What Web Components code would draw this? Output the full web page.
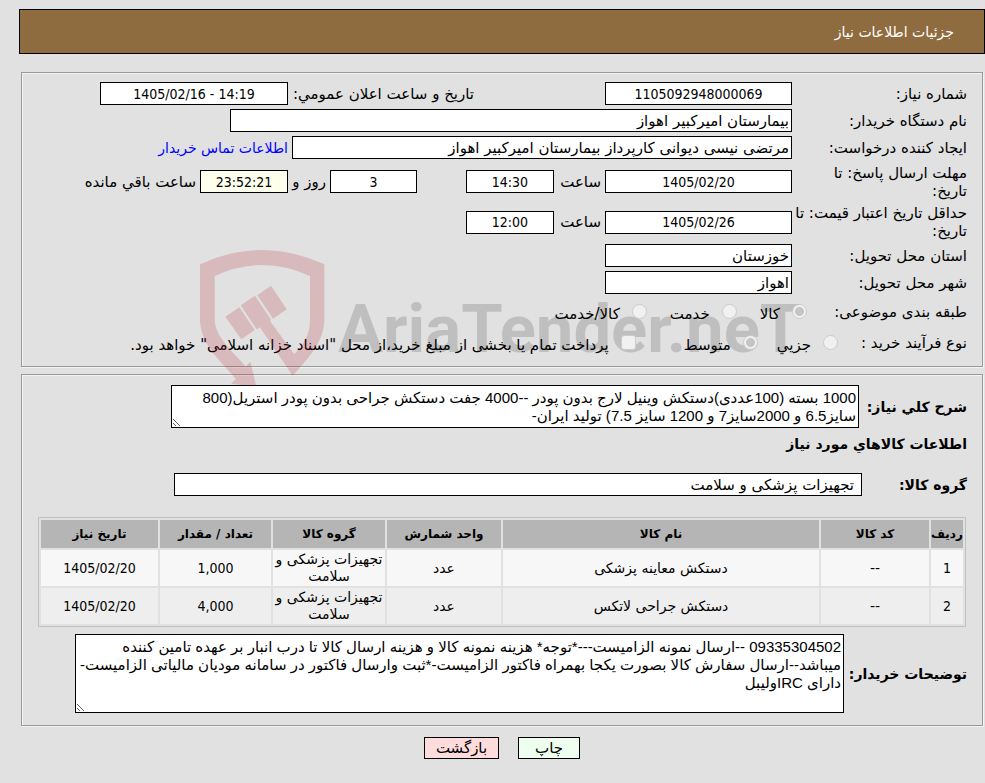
<!DOCTYPE html>
<html lang="fa" dir="rtl">
<head>
<meta charset="utf-8">
<title>جزئیات اطلاعات نیاز</title>
<style>
  body {
    --number-font: 14px/18px "DejaVu Sans Condensed", "DejaVu Sans", sans-serif;
    margin: 0;
    padding: 9px 0 16px 19px;
    background: #e1e1e1;
    color: #000;
    font: 15px/18px "DejaVu Sans", sans-serif;
  }
</style>
</head>
<body>
<need-page></need-page>

<script>
const define = (name, cls) => customElements.define(name, cls);

class PageBanner extends HTMLElement {
  constructor() {
    super();
    this.attachShadow({ mode: 'open' }).innerHTML = `
      <style>
        :host {
          display: block;
          padding: 13px 30px 12px;
          border: 1px solid #000;
          background: #8e6c40;
          color: #fff;
          font-size: 14px;
        }
        h1 { margin: 0; font: inherit; }
      </style>
      <h1><slot></slot></h1>
    `;
  }
}
define('page-banner', PageBanner);

class NeedPanel extends HTMLElement {
  constructor() {
    super();
    this.attachShadow({ mode: 'open' }).innerHTML = `
      <style>
        :host { display: block; margin: 0 1px 0 2px; }
        section {
          border: 1px solid #9a9a9a;
          box-shadow: inset 1px 1px #f2f2f2, 1px 1px #f2f2f2;
          padding: 7px 15px 8px;
          margin: 0 1px 1px 0;
        }
      </style>
      <section><slot></slot></section>
    `;
  }
}
define('need-panel', NeedPanel);

class NeedRow extends HTMLElement {
  constructor() {
    super();
    this.attachShadow({ mode: 'open' }).innerHTML = `
      <style>
        :host {
          display: flex;
          align-items: center;
          min-height: var(--row-height, 27px);
        }
      </style>
      <slot></slot>
    `;
  }
}
define('need-row', NeedRow);

// label + one line input, optional text after the input
class TextField extends HTMLElement {
  connectedCallback() {
    const label = this.getAttribute('label') || '';
    const hint = this.getAttribute('hint') || '';
    const value = this.getAttribute('value') || '';
    const suffix = this.getAttribute('suffix') || '';
    this.attachShadow({ mode: 'open' }).innerHTML = `
      <style>
        :host { display: flex; align-items: center; }
        label {
          box-sizing: border-box;
          width: var(--label-width, 175px);
          white-space: pre;
        }
        input {
          box-sizing: border-box;
          width: var(--field-width, 187px);
          height: 23px;
          margin: 0;
          padding: 0 2px;
          border: 1px solid #000;
          background: var(--field-bg, #fff);
          color: inherit;
          font: inherit;
        }
        :host([center]) input { font: var(--number-font); text-align: center; direction: ltr; }
        :host([bold]) label { font-weight: bold; font-size: 14px; }
        :host([bold]) input { padding: 0 7px; }
        span { padding-inline-start: 4px; white-space: nowrap; }
      </style>
      ${label ? `<label for="field">${label}</label>` : ''}
      <input id="field" type="text" readonly value="${value}" ${hint ? `aria-label="${hint}"` : ''}>
      ${suffix ? `<span>${suffix}</span>` : ''}
    `;
  }
}
define('text-field', TextField);

class AreaField extends HTMLElement {
  connectedCallback() {
    this.attachShadow({ mode: 'open' }).innerHTML = `
      <style>
        :host { display: flex; align-items: center; }
        label {
          width: var(--label-width, 108px);
          font-weight: bold;
          font-size: 14px;
          white-space: nowrap;
        }
        textarea {
          box-sizing: border-box;
          width: var(--area-width, 688px);
          height: var(--area-height, 43px);
          margin: 0;
          padding: 3px 2px;
          border: 1px solid #000;
          background: #fff;
          color: inherit;
          font: 15px/18px "Liberation Sans", "DejaVu Sans", sans-serif;
          overflow: hidden;
        }
      </style>
      <label for="area">${this.getAttribute('label')}</label>
      <textarea id="area" readonly>${this.textContent.trim()}</textarea>
    `;
  }
}
define('area-field', AreaField);

// radio or tick box followed by its text
class OptionItem extends HTMLElement {
  connectedCallback() {
    const type = this.getAttribute('type') || 'radio';
    this.attachShadow({ mode: 'open' }).innerHTML = `
      <style>
        :host { display: flex; }
        label {
          display: flex;
          align-items: center;
          white-space: nowrap;
        }
        input {
          appearance: none;
          box-sizing: border-box;
          width: 15px;
          height: 15px;
          margin: 0;
          margin-inline-end: 12px;
          border: 1px solid #cbcbcb;
          border-radius: 50%;
          background: #f1f1f1;
          position: relative;
          z-index: 1;
        }
        input[type=checkbox] { border-radius: 3px; }
        input:checked {
          background: radial-gradient(circle, #c4c4c4 4px, #f1f1f1 5px);
        }
        span { padding-top: 5px; }
      </style>
      <label>
        <input type="${type}" disabled ${this.hasAttribute('checked') ? 'checked' : ''}>
        <span><slot></slot></span>
      </label>
    `;
  }
}
define('option-item', OptionItem);

class GoodsTable extends HTMLElement {
  constructor() {
    super();
    const columns = [
      ['ردیف', 32], ['کد کالا', 108], ['نام کالا', 0], ['واحد شمارش', 114],
      ['گروه کالا', 112], ['تعداد / مقدار', 111], ['تاریخ نیاز', 117],
    ];
    const rows = [
      ['1', '--', 'دستکش معاینه پزشکی', 'عدد', 'تجهیزات پزشکی و سلامت', '1,000', '1405/02/20'],
      ['2', '--', 'دستکش جراحی لاتکس', 'عدد', 'تجهیزات پزشکی و سلامت', '4,000', '1405/02/20'],
    ];
    const cell = c => `<td${/^[\d,/]+$/.test(c) ? ' class="number"' : ''}>${c}</td>`;
    this.attachShadow({ mode: 'open' }).innerHTML = `
      <style>
        :host { display: block; }
        table {
          width: 100%;
          table-layout: fixed;
          border: 1px solid #c0c0c0;
          border-collapse: separate;
          border-spacing: 2px;
          font-size: 14px;
          line-height: 17px;
          text-align: center;
        }
        th { height: 28px; padding: 0; background: #b5b5b5; font-size: 12px; white-space: nowrap; }
        td { height: 36px; padding: 0; background: #f7f7f7; }
        tr:nth-child(even) td { background: #eee; }
        .number { font: var(--number-font); }
      </style>
      <table>
        <colgroup>${columns.map(([, w]) => `<col${w ? ` style="width:${w}px"` : ''}>`).join('')}</colgroup>
        <thead><tr>${columns.map(([name]) => `<th scope="col">${name}</th>`).join('')}</tr></thead>
        <tbody>${rows.map(r => `<tr>${r.map(cell).join('')}</tr>`).join('')}</tbody>
      </table>
    `;
  }
}
define('goods-table', GoodsTable);

class ActionButton extends HTMLElement {
  constructor() {
    super();
    this.attachShadow({ mode: 'open' }).innerHTML = `
      <style>
        :host { display: block; }
        button {
          box-sizing: border-box;
          width: var(--button-width, 62px);
          height: 22px;
          padding: 0;
          border: 1px solid #000;
          background: var(--button-bg, #efffef);
          color: inherit;
          font: inherit;
        }
      </style>
      <button type="button"><slot></slot></button>
    `;
  }
}
define('action-button', ActionButton);

class SiteWatermark extends HTMLElement {
  constructor() {
    super();
    this.attachShadow({ mode: 'open' }).innerHTML = `
      <style>
        :host {
          position: absolute;
          top: 241px;
          left: 0;
          right: 0;
          display: flex;
          justify-content: center;
          pointer-events: none;
        }
        svg { direction: ltr; overflow: visible; }
        text {
          font-family: Roboto, "Liberation Sans", sans-serif;
          font-weight: bold;
          font-size: 67px;
        }
      </style>
      <svg width="604" height="140" viewBox="0 0 604 140" aria-hidden="true">
        <g transform="translate(-20 -20) scale(.3333)" fill="#b41e28" fill-opacity=".2">
          <path d="M60 103Q245 17 433 103V270C432 335 385 385 338 437L240 292L230 298L182 226L225 197L273 269L270 273L343 373C370 345 390 315 390 270V138Q245 72 104 138V270C107 325 160 365 197 410L211 395L229 469L153 461L168 447C120 390 62 345 60 270Z"/>
          <path d="M136 260L178 232L224 300L184 328Z"/>
          <path d="M232 196L273 167L320 238L279 266Z"/>
        </g>
        <text x="138" y="102" fill="#000" fill-opacity=".15">AriaTender.neT</text>
      </svg>
    `;
  }
}
define('site-watermark', SiteWatermark);

class NeedPage extends HTMLElement {
  constructor() {
    super();
    this.attachShadow({ mode: 'open' }).innerHTML = `
      <style>
        :host { display: block; position: relative; }
        need-panel.general { margin-top: 18px; }
        need-panel.goods { margin-top: 7px; }
        a { color: #00f; text-decoration: none; font-size: 14px; padding-inline-start: 4px; }
        .deadline { --row-height: 41px; }
        .validity { --row-height: 40px; }
        .choices { --row-height: 31px; }
        .choices b { font-weight: normal; white-space: nowrap; }
        .subject b { width: 160px; }
        .subject option-item + option-item { margin-inline-start: 23px; }
        .process b { width: 129px; }
        .process option-item + option-item { margin-inline-start: 19px; }
        .process option-item.treasury { margin-inline-start: 48px; }
        .wide { --field-width: 562px; }
        .creator { --field-width: 500px; }
        .announced { --label-width: 186px; --field-width: 188px; margin-inline-start: 131px; }
        .hour { --label-width: 47px; --field-width: 88px; padding-inline-start: 4px; }
        .days { --field-width: 87px; margin-inline-start: 49px; }
        .left { --label-width: 38px; --field-width: 88px; --field-bg: #ffffee; padding-inline-start: 4px; }
        .summary { --label-width: 108px; padding-top: 3px; }
        h2 { margin: 7px 0 20px; font-size: 14px; line-height: 18px; }
        .group { --label-width: 105px; --field-width: 688px; }
        goods-table { margin: 21px 1px 0; }
        .notes { --label-width: 123px; --area-width: 769px; --area-height: 79px; margin: 7px 0 4px; }
        footer { display: flex; justify-content: center; gap: 19px; margin-top: 11px; }
        .back { --button-width: 75px; --button-bg: #ffdcdc; }
      </style>
      <page-banner>جزئیات اطلاعات نیاز</page-banner>

      <need-panel class="general">
        <need-row>
          <text-field label="شماره نیاز:" value="1105092948000069" center></text-field>
          <text-field class="announced" label="تاریخ و ساعت اعلان عمومي:" value="1405/02/16 - 14:19" center></text-field>
        </need-row>
        <need-row>
          <text-field class="wide" label="نام دستگاه خریدار:" value="بیمارستان امیرکبیر اهواز"></text-field>
        </need-row>
        <need-row>
          <text-field class="creator" label="ایجاد کننده درخواست:" value="مرتضی نیسی دیوانی کارپرداز بیمارستان امیرکبیر اهواز"></text-field>
          <a href="#contact">اطلاعات تماس خریدار</a>
        </need-row>
        <need-row class="deadline">
          <text-field label="مهلت ارسال پاسخ: تا&#10;تاریخ:" value="1405/02/20" center></text-field>
          <text-field class="hour" label="ساعت" value="14:30" center></text-field>
          <text-field class="days" hint="روز" value="3" center></text-field>
          <text-field class="left" label="روز و" value="23:52:21" suffix="ساعت باقي مانده" center></text-field>
        </need-row>
        <need-row class="validity">
          <text-field label="حداقل تاریخ اعتبار قیمت: تا&#10;تاریخ:" value="1405/02/26" center></text-field>
          <text-field class="hour" label="ساعت" value="12:00" center></text-field>
        </need-row>
        <need-row>
          <text-field label="استان محل تحویل:" value="خوزستان"></text-field>
        </need-row>
        <need-row>
          <text-field label="شهر محل تحویل:" value="اهواز"></text-field>
        </need-row>
        <need-row class="choices subject">
          <b>طبقه بندی موضوعی:</b>
          <option-item checked>کالا</option-item>
          <option-item>خدمت</option-item>
          <option-item>کالا/خدمت</option-item>
        </need-row>
        <need-row class="choices process">
          <b>نوع فرآیند خرید :</b>
          <option-item>جزیي</option-item>
          <option-item checked>متوسط</option-item>
          <option-item class="treasury" type="checkbox">پرداخت تمام یا بخشی از مبلغ خرید،از محل "اسناد خزانه اسلامی" خواهد بود.</option-item>
        </need-row>
      </need-panel>

      <need-panel class="goods">
        <area-field class="summary" label="شرح کلي نیاز:">1000 بسته (100عددی)دستکش وینیل لارج بدون پودر --4000 جفت دستکش جراحی بدون پودر استریل(800
سایز6.5 و 2000سایز7 و 1200 سایز 7.5) تولید ایران-</area-field>
        <h2>اطلاعات کالاهاي مورد نیاز</h2>
        <text-field class="group" label="گروه کالا:" value="تجهیزات پزشکی و سلامت" bold></text-field>
        <goods-table></goods-table>
        <area-field class="notes" label="توضیحات خریدار:">09335304502 --ارسال نمونه الزامیست---*توجه* هزینه نمونه کالا و هزینه ارسال کالا تا درب انبار بر عهده تامین کننده
میباشد--ارسال سفارش کالا بصورت یکجا بهمراه فاکتور الزامیست-*ثبت وارسال فاکتور در سامانه مودیان مالیاتی الزامیست-
دارای IRCولیبل</area-field>
      </need-panel>

      <footer>
        <action-button>چاپ</action-button>
        <action-button class="back">بازگشت</action-button>
      </footer>
      <site-watermark></site-watermark>
    `;
  }
}
define('need-page', NeedPage);
</script>
</body>
</html>
